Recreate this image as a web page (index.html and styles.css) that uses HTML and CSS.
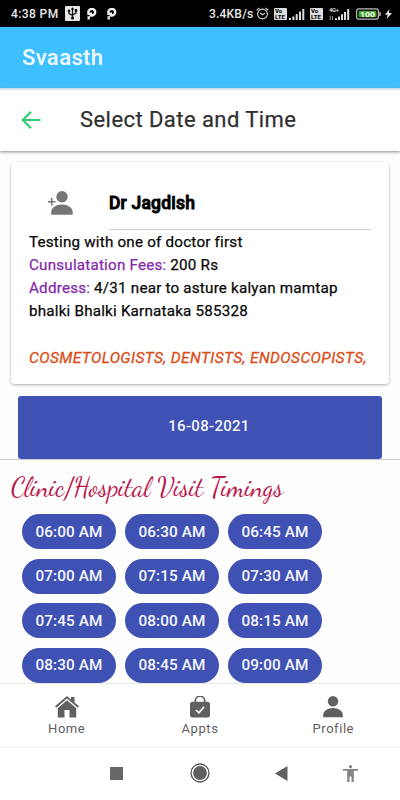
FILE: index.html
```html
<!DOCTYPE html>
<html lang="en">
<head>
<meta charset="utf-8">
<title>Svaasth</title>
<link rel="stylesheet" href="styles.css">
</head>
<body>
<div class="status">
  <span class="clock">4:38 PM</span>
  <svg class="usb" width="15" height="15" viewBox="0 0 15 15"><rect width="15" height="15" rx="1" fill="#e8e8e8"/><path d="M7.500 2v9M4 5v2.500l3.500 2M11 4v3L7.500 9" fill="none" stroke="#111" stroke-width="1.300"/><circle cx="7.500" cy="12" r="1.500"/><circle cx="4" cy="4.800" r="1.300"/><path d="M9.800 3h2.400v2.400H9.800zM5.800 3.500l1.700-2.200 1.700 2.200z"/></svg>
  <svg class="pp" width="10" height="12" viewBox="0 0 10 12"><path d="M1.500 7V5A3.400 3.300 0 1 1 5 7.500H3.800V4.500M1.700 8.200V11.500" fill="none" stroke="#eee" stroke-width="2.400"/></svg>
  <svg class="pp second" width="10" height="12" viewBox="0 0 10 12"><path d="M1.500 7V5A3.400 3.300 0 1 1 5 7.500H3.800V4.500M1.700 8.200V11.500" fill="none" stroke="#eee" stroke-width="2.400"/></svg>
  <span class="speed">3.4KB/s</span>
  <svg class="alarm" width="13" height="13" viewBox="0 0 13 13" fill="none" stroke="#d5d5d5"><circle cx="6.500" cy="7" r="4.900" stroke-width="1.100"/><path d="M.7 3.300 3.500.9M12.300 3.300 9.500.9M4.200 5.800l2.300 2 2.500-1.500" stroke-width="1.200"/></svg>
  <div class="volte"><span>Vo</span><span>LTE</span></div>
  <svg class="bars" width="16" height="12" viewBox="0 0 16 12" fill="#ddd"><path d="M0 10h2v2H0zM3.400 8.500h2V12h-2zM6.700 6h2v6h-2zM10 3.500h2V12h-2zM13.300 1h2v11h-2z"/></svg>
  <div class="volte v2"><span>Vo</span><span>LTE</span></div>
  <svg class="bars4g" width="21" height="14" viewBox="0 0 21 14" fill="#ddd"><text x="0" y="5" font-size="5.800" font-weight="700" textLength="10">4G+</text><path d="M1.200 9v4M3.500 9v4" stroke="#999" stroke-width="1"/><path d="M6 11.300h2V13H6zM9 9.500h2V13H9zM12 7.300h2V13h-2zM15 5h2v8h-2zM18.200 2h2v11h-2z"/></svg>
  <svg class="battery" width="25" height="12" viewBox="0 0 25 12"><rect x=".6" y=".9" width="21.800" height="10.200" rx="2.300" fill="none" stroke="#bbb" stroke-width="1.200"/><rect x="2.500" y="2.800" width="18" height="6.400" rx="1" fill="#43a32b"/><path d="M23.200 4h1.500v4h-1.500z" fill="#bbb"/><text x="11.500" y="8.800" text-anchor="middle" font-size="8" font-weight="700" fill="#fff" textLength="15" lengthAdjust="spacingAndGlyphs">100</text></svg>
  <svg class="bolt" width="7" height="10" viewBox="0 0 7 10"><path d="M4.500 0 0 5.700h2.700L1.700 10 7 4.100H3.800z" fill="#e8e8e8"/></svg>
</div>
<header class="brand">Svaasth</header>
<div class="toolbar">
  <svg width="20" height="18" viewBox="0 0 20 18" fill="none" stroke="#35cd72" stroke-width="2.200"><path d="M19.500 9H2M10 .8 1.700 9l8.300 8.200"/></svg>
  <h1>Select Date and Time</h1>
</div>
<main>
  <section class="card">
    <div class="doctor">
      <svg width="25" height="24" viewBox="0 0 25 24" fill="#757575"><circle cx="14" cy="5.700" r="5.700"/><path d="M3.200 23.700V21c0-4 5-7.400 10.800-7.400S24.700 17 24.700 21v2.700zM3 7h1.500v3h3v1.500h-3v3H3v-3H0V10h3z"/></svg>
      <div class="name">Dr Jagdish</div>
    </div>
    <div class="details">
      <p>Testing with one of doctor first</p>
      <p><b>Cunsulatation Fees:</b> 200 Rs</p>
      <p><b>Address:</b> 4/31 near to asture kalyan mamtap</p>
      <p>bhalki Bhalki Karnataka 585328</p>
    </div>
    <p class="special">COSMETOLOGISTS, DENTISTS, ENDOSCOPISTS,</p>
  </section>
  <div class="date">16-08-2021</div>
  <section class="timings">
    <h2>Clinic/Hospital Visit Timings</h2>
    <div class="slots">
      <span>06:00 AM</span><span>06:30 AM</span><span>06:45 AM</span>
      <span>07:00 AM</span><span>07:15 AM</span><span>07:30 AM</span>
      <span>07:45 AM</span><span>08:00 AM</span><span>08:15 AM</span>
      <span>08:30 AM</span><span>08:45 AM</span><span>09:00 AM</span>
    </div>
  </section>
</main>
<nav class="tabs">
  <div><svg width="24" height="22" viewBox="0 0 24 22" fill="#606060"><path d="m12 0-12 10.300 1.300 1.500L12 2.600l10.700 9.200 1.300-1.500-4.500-3.900V1h-3.500v2.400z"/><path d="m12 4.300-9.200 8V21.500h6.700V14h5v7.500h6.700v-9.200z"/></svg><span>Home</span></div>
  <div><svg width="20" height="22" viewBox="0 0 20 22"><path d="M5.300 7V4.800a4.700 4.700 0 0 1 9.400 0V7" fill="none" stroke="#606060" stroke-width="1.700"/><rect y="5.800" width="20" height="15.700" rx="2.500" fill="#606060"/><path d="m6 14 3 2.800 5-6" fill="none" stroke="#fff" stroke-width="1.700"/></svg><span>Appts</span></div>
  <div><svg width="20" height="22" viewBox="0 0 20 22" fill="#606060"><circle cx="10" cy="5.200" r="5.200"/><path d="M.2 21.300V19C.2 15 4.500 12 10 12s9.800 3 9.800 7v2.300z"/></svg><span>Profile</span></div>
</nav>
<footer class="system">
  <svg class="recent" width="13" height="13"><rect width="13" height="13" fill="#666"/></svg>
  <svg class="home" width="20" height="20" viewBox="0 0 20 20"><circle cx="10" cy="10" r="9" fill="none" stroke="#555" stroke-width="1.300"/><circle cx="10" cy="10" r="6.900" fill="#606060"/></svg>
  <svg class="back" width="13" height="15" viewBox="0 0 13 15"><path d="M12.500 0v15L0 7.500z" fill="#606060"/></svg>
  <svg class="access" width="15" height="17" viewBox="0 0 15 17" fill="#858585"><circle cx="7.500" cy="1.700" r="1.600"/><path d="M0 4h15v1.700h-4.200V17H8.500v-5.500h-2V17H4.200V5.700H0z"/></svg>
</footer>
</body>
</html>
```
FILE: styles.css
```css
* { box-sizing: border-box; }
body { margin: 0; width: 400px; height: 800px; overflow: hidden; display: flex; flex-direction: column; background: #fff; font-family: Roboto, sans-serif; color: #080808; }
h1, h2, p { margin: 0; font-weight: 400; white-space: nowrap; }
svg { flex: none; display: block; }
.status { height: 27px; flex: none; display: flex; align-items: center; background: #000; color: #e8e8e8; font-size: 12px; font-weight: 500; padding-left: 11px; white-space: nowrap; }
.clock { width: 54px; letter-spacing: .4px; }
.pp { margin-left: 7px; }
.pp.second { margin-left: 10px; }
.speed { margin-left: 92px; width: 47px; letter-spacing: .2px; }
.volte { width: 13px; height: 12px; margin-left: 5px; border-radius: 1px; background: #ddd; color: #111; font-size: 6px; line-height: 6px; font-weight: 900; display: flex; flex-direction: column; padding-left: 1px; flex: none; }
.bars { margin-left: 2px; }
.v2 { margin-left: 5px; }
.bars4g { margin-left: 6px; }
.battery { margin-left: 6px; }
.bolt { margin-left: 4px; }
.brand { height: 61px; flex: none; background: #3ebfff; color: #f3fbff; font-size: 22px; font-weight: 500; line-height: 62px; padding-left: 22px; letter-spacing: .4px; }
.toolbar { height: 63px; flex: none; border-top: 2px solid #cfe2eb; display: flex; align-items: center; padding: 0 0 1px 21px; background: #fff; box-shadow: 0 1px 3px #888; position: relative; }
.toolbar h1 { margin-left: 39px; font-size: 22px; line-height: 26px; letter-spacing: .44px; color: #303030; -webkit-text-stroke: .25px #303030; }
main { height: 532px; flex: none; overflow: hidden; background: #fefefe; }
.card { height: 222px; margin: 11px 11px 12px; border-radius: 4px; background: #fff; box-shadow: 0 1px 3px #aaa; padding: 0 18px; }
.doctor { height: 68px; display: flex; padding-left: 19px; }
.doctor svg { margin-top: 29px; }
.name { flex: 1; margin-left: 36px; border-bottom: 1px solid #ccc; font-size: 17.500px; line-height: 83px; font-weight: 500; color: #000; letter-spacing: .2px; -webkit-text-stroke: .9px #000; }
.details { padding-top: .5px; font-size: 15.200px; line-height: 23.300px; letter-spacing: .21px; -webkit-text-stroke: .25px; }
.details b { font-weight: 400; color: #842aaa; }
.special { margin-top: 23.500px; font-size: 15.500px; line-height: 23px; letter-spacing: .38px; font-style: italic; color: #d94d17; -webkit-text-stroke: .3px; }
.date { margin: 0 18px; height: 63px; border-radius: 3px; background: #3f51b3; color: #f3f5ff; text-align: center; line-height: 61px; font-size: 15px; font-weight: 500; letter-spacing: .3px; padding-left: 18px; }
.timings { border-top: 1px solid #ccc; height: 230px; }
.timings h2 { height: 54px; padding-left: 11px; line-height: 54px; font-family: "Dancing Script", cursive; font-size: 26.700px; color: #b9174b; }
.slots { display: grid; grid-template-columns: repeat(3, 94px); grid-auto-rows: 35px; gap: 9.500px 9px; padding-left: 22px; }
.slots span { border-radius: 18px; background: #3f51b3; color: #f6f7ff; display: flex; align-items: center; justify-content: center; font-size: 15.300px; font-weight: 500; letter-spacing: .1px; white-space: nowrap; }
.tabs { height: 65px; flex: none; display: grid; grid-template-columns: repeat(3, 1fr); border-top: 1px solid #e6e6e6; border-bottom: 2px solid #f5f5f5; background: #fff; }
.tabs div { display: flex; flex-direction: column; align-items: center; padding-top: 12px; color: #606060; font-size: 13px; line-height: 16px; letter-spacing: .55px; }
.tabs span { margin-top: 3px; }
.system { flex: 1; display: flex; align-items: center; padding: 0 0 2px 110px; background: #fff; }
.home { margin-left: 67px; }
.back { margin-left: 65px; }
.access { margin-left: 55px; }
```
